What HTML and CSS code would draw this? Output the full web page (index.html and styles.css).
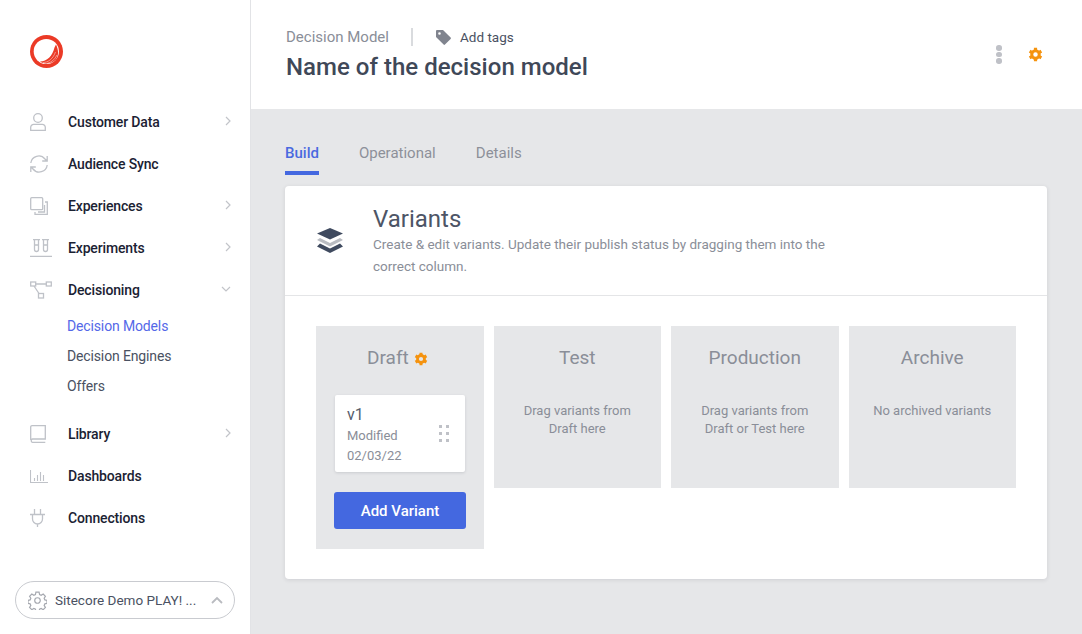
FILE: index.html
```html
<!DOCTYPE html>
<html lang="en">
<head>
<meta charset="utf-8">
<title>Decision Model</title>
<link rel="stylesheet" href="styles.css">
</head>
<body>
<svg class="defs" width="0" height="0">
  <symbol id="cog" viewBox="0 0 16 16">
    <circle cx="8" cy="8" r="4" fill="none" stroke="currentColor" stroke-width="3.200"/>
    <path d="M6.300 .8h3.400v3H6.300zM6.300 12.200h3.400v3H6.300z" fill="currentColor"/>
    <path d="M6.300 .8h3.400v3H6.300zM6.300 12.200h3.400v3H6.300z" fill="currentColor" transform="rotate(60 8 8)"/>
    <path d="M6.300 .8h3.400v3H6.300zM6.300 12.200h3.400v3H6.300z" fill="currentColor" transform="rotate(120 8 8)"/>
  </symbol>
</svg>
<div class="app">
  <aside class="sidebar">
    <div class="logo">
      <svg width="33" height="33" viewBox="0 0 33 33">
        <circle cx="16.500" cy="16.500" r="16.500" fill="#eb3a26"/>
        <circle cx="16.300" cy="16.500" r="12.600" fill="#fff"/>
        <path d="M10 26.500 C17 26.500 22.500 21 24.500 12.500 L26 9.500 C28.500 15 29 20 26 24.500 C22 29 15 30 10 26.500 Z" fill="#eb3a26"/>
        <path d="M13 27.500 C18 27.500 23 24 25.500 17 M17 28.500 C21 27.500 25 24.500 27 20" stroke="#fff" stroke-width=".45" fill="none"/>
      </svg>
    </div>
    <nav class="nav">
      <a class="nav-item">
        <svg class="nav-icon" viewBox="0 0 22 18"><circle cx="8" cy="5" r="4.300"/><path d="M.7 17.300v-3a3 3 0 0 1 3-3h8.600a3 3 0 0 1 3 3v3z"/></svg>
        <span class="nav-label">Customer Data</span>
        <svg class="chev" viewBox="0 0 8 12"><path d="M2 2l4 4-4 4"/></svg>
      </a>
      <a class="nav-item">
        <svg class="nav-icon" viewBox="0 0 22 18"><path d="M.8 8a8 8 0 0 1 14.200-4l2 2M17.200 1v5h-5M17.200 10a8 8 0 0 1-14.200 4l-2-2M.8 17v-5h5"/></svg>
        <span class="nav-label">Audience Sync</span>
      </a>
      <a class="nav-item">
        <svg class="nav-icon" viewBox="0 0 22 18"><rect x=".7" y=".7" width="12" height="12" rx="1"/><path d="M15 5h2.300v12.300H5V15M8 15h6.500V8"/></svg>
        <span class="nav-label">Experiences</span>
        <svg class="chev" viewBox="0 0 8 12"><path d="M2 2l4 4-4 4"/></svg>
      </a>
      <a class="nav-item">
        <svg class="nav-icon" viewBox="0 0 22 18"><path d="M3 .7h7M4.500 .7v9.800a2 2 0 0 0 4 0V.7M12 .7h7M13.500 .7v9.800a2 2 0 0 0 4 0V.7M4.500 6h4M13.500 6h4M0 17.300h22"/></svg>
        <span class="nav-label">Experiments</span>
        <svg class="chev" viewBox="0 0 8 12"><path d="M2 2l4 4-4 4"/></svg>
      </a>
      <a class="nav-item">
        <svg class="nav-icon" viewBox="0 0 22 18"><rect x=".7" y="1" width="5" height="4"/><rect x="16.300" y="1" width="5" height="4"/><rect x="8.500" y="12.500" width="5" height="4.500"/><path d="M5.700 3h10.600M4 5l5 7.500"/></svg>
        <span class="nav-label">Decisioning</span>
        <svg class="chev down" viewBox="0 0 12 8"><path d="M2 2l4 4 4-4"/></svg>
      </a>
      <div class="subnav">
        <a class="sub-item active">Decision Models</a>
        <a class="sub-item">Decision Engines</a>
        <a class="sub-item">Offers</a>
      </div>
      <a class="nav-item">
        <svg class="nav-icon" viewBox="0 0 22 18"><path d="M.7 15V2a1.300 1.300 0 0 1 1.300-1.300h13.300V14H2.500a1.700 1.700 0 0 0 0 3.300h12.800"/></svg>
        <span class="nav-label">Library</span>
        <svg class="chev" viewBox="0 0 8 12"><path d="M2 2l4 4-4 4"/></svg>
      </a>
      <a class="nav-item">
        <svg class="nav-icon" viewBox="0 0 22 18"><path d="M.5 3v12.500H18M4.500 11v3M7.500 8v6M10.500 5v9M13.500 8v6" stroke-width="1.100"/></svg>
        <span class="nav-label">Dashboards</span>
      </a>
      <a class="nav-item">
        <svg class="nav-icon" viewBox="0 0 22 18"><path d="M4.500 0v5M10.500 0v5M0 5.500h15M2.500 5.500V10a5 5 0 0 0 10 0V5.500M7.500 15v3"/></svg>
        <span class="nav-label">Connections</span>
      </a>
    </nav>
    <div class="org">
      <svg class="org-gear" viewBox="0 0 24 24"><path d="M12 8.500a3.500 3.500 0 1 0 0 7 3.500 3.500 0 0 0 0-7zM10 1.500h4l.6 3 2 .9 2.600-1.600 2.800 2.800-1.600 2.600.9 2 2.700.6v3.800l-2.700.6-.9 2 1.600 2.600-2.800 2.800-2.600-1.600-2 .9-.6 2.700h-4l-.6-2.700-2-.9-2.600 1.600-2.800-2.800 1.600-2.600-.9-2-2.700-.6v-3.800l2.700-.6.9-2-1.600-2.600 2.800-2.800 2.600 1.600 2-.9z"/></svg>
      <span class="org-name">Sitecore Demo PLAY! ...</span>
      <svg class="org-chev" viewBox="0 0 14 8"><path d="M2 7l5-5 5 5"/></svg>
    </div>
  </aside>

  <main class="main">
    <header class="page-header">
      <div class="head-text">
        <div class="head-meta">
          <span class="head-type">Decision Model</span>
          <span class="head-sep"></span>
          <svg class="tag-icon" viewBox="0 0 15 15"><path d="M0 1a1 1 0 0 1 1-1h6l7.600 7.600a1 1 0 0 1 0 1.400l-5.600 5.600a1 1 0 0 1-1.400 0L0 7zM3.500 2.200a1.300 1.300 0 1 0 0 2.600 1.300 1.300 0 0 0 0-2.600z" fill-rule="evenodd"/></svg>
          <span class="head-tags">Add tags</span>
        </div>
        <h1 class="head-title">Name of the decision model</h1>
      </div>
      <div class="head-actions">
        <span class="kebab"><i></i><i></i><i></i></span>
        <svg class="gear"><use href="#cog"/></svg>
      </div>
    </header>

    <section class="content">
      <div class="tabs">
        <a class="tab active">Build</a>
        <a class="tab">Operational</a>
        <a class="tab">Details</a>
      </div>
      <div class="card">
        <div class="card-head">
          <svg class="layers" viewBox="0 0 26 25">
            <path d="M3 10 0 12 13 18.500 26 12l-3-2-10 5z" fill="#b9bcc2"/>
            <path d="M13 0 26 5.500 13 11.500 0 5.500z" fill="#3f4a5f"/>
            <path d="M3 15.500 0 18.500 13 25l13-6.500-3-3-10 5z" fill="#3f4a5f"/>
          </svg>
          <div class="card-head-text">
            <h2 class="card-title">Variants</h2>
            <p class="card-desc">Create &amp; edit variants. Update their publish status by dragging them into the correct column.</p>
          </div>
        </div>
        <div class="board">
          <div class="col col-draft">
            <h3 class="col-title">Draft
              <svg class="gear small"><use href="#cog"/></svg>
            </h3>
            <div class="variant">
              <div class="variant-text">
                <div class="variant-name">v1</div>
                <div class="variant-meta">Modified</div>
                <div class="variant-meta">02/03/22</div>
              </div>
              <span class="drag"><i></i><i></i><i></i><i></i><i></i><i></i></span>
            </div>
            <button class="add-btn">Add Variant</button>
          </div>
          <div class="col">
            <h3 class="col-title">Test</h3>
            <p class="col-empty">Drag variants from<br>Draft here</p>
          </div>
          <div class="col">
            <h3 class="col-title">Production</h3>
            <p class="col-empty">Drag variants from<br>Draft or Test here</p>
          </div>
          <div class="col">
            <h3 class="col-title">Archive</h3>
            <p class="col-empty">No archived variants</p>
          </div>
        </div>
      </div>
    </section>
  </main>
</div>
</body>
</html>
```

FILE: styles.css
```css
* { box-sizing: border-box; }
html, body { margin: 0; height: 100%; }
body { font-family: Roboto, "Liberation Sans", sans-serif; background: #e6e7e9; overflow: hidden; }
.defs { display: block; height: 0; }
.app { display: flex; height: 634px; }

.sidebar { width: 251px; flex: none; background: #fff; border-right: 1px solid #e2e3e6; display: flex; flex-direction: column; padding: 35px 15px 15px; }
.logo { height: 33px; padding-left: 15px; }
.nav { margin-top: 33px; display: flex; flex-direction: column; flex: 1; }
.nav-item { height: 42px; display: flex; align-items: center; padding-left: 15px; font-size: 14px; font-weight: 500; color: #1b2233; }
.nav-icon { width: 22px; height: 18px; flex: none; fill: none; stroke: #bfc2c8; stroke-width: 1.300; }
.nav-label { margin-left: 16px; flex: 1; letter-spacing: -.15px; }
.chev { width: 8px; height: 12px; margin-right: 3px; margin-top: -3px; fill: none; stroke: #c2c4c9; stroke-width: 1.200; }
.chev.down { width: 12px; height: 8px; margin-right: 3px; }
.subnav { display: flex; flex-direction: column; margin-bottom: 12px; }
.sub-item { height: 30px; line-height: 30px; padding-left: 52px; font-size: 14px; color: #4a5162; letter-spacing: -.14px; }
.sub-item.active { color: #5468e8; }

.org { height: 38px; width: 220px; border: 1px solid #c9cbd0; border-radius: 19px; display: flex; align-items: center; padding: 0 10px 0 12px; }
.org-gear { width: 19px; height: 19px; fill: none; stroke: #a5a8af; stroke-width: 1.500; flex: none; }
.org-name { margin-left: 8px; font-size: 13.500px; color: #4a5162; flex: 1; white-space: nowrap; }
.org-chev { width: 14px; height: 8px; fill: none; stroke: #b9bbc0; stroke-width: 1.800; flex: none; }

.main { flex: 1; min-width: 0; display: flex; flex-direction: column; }
.page-header { height: 109px; background: #fff; display: flex; justify-content: space-between; padding: 27px 39px 0 35px; }
.head-meta { display: flex; align-items: center; height: 20px; }
.head-type { font-size: 15px; color: #8a8e98; width: 125px; }
.head-sep { width: 2px; height: 18px; background: #d9dbde; }
.tag-icon { width: 15px; height: 15px; margin-left: 23px; fill: #80848e; }
.head-tags { margin-left: 9px; font-size: 13.500px; color: #4a5162; }
.head-title { margin: 7px 0 0; font-size: 24px; font-weight: 500; line-height: 26px; color: #3f4858; letter-spacing: .02px; }
.head-actions { display: flex; align-items: flex-start; gap: 26px; padding-top: 18px; }
.kebab { display: flex; flex-direction: column; gap: 1px; width: 6px; }
.kebab i { width: 5.500px; height: 5.500px; border-radius: 50%; background: #bfc1c7; }
.gear { width: 15px; height: 15px; color: #f5930f; margin-top: 2px; }
.gear.small { width: 14px; height: 14px; margin: 0 4px -2px 1px; }

.content { flex: 1; padding: 0 35px 0 34px; }
.tabs { display: flex; gap: 40px; height: 66px; padding-top: 34px; }
.tab { font-size: 15px; color: #8d9099; height: 32px; line-height: 21px; }
.tab.active { color: #4a6ae0; font-weight: 500; border-bottom: 4px solid #4468e0; }

.card { margin-top: 11px; height: 393px; background: #fff; border-radius: 4px; box-shadow: 0 1px 4px rgba(40,45,60,.12); }
.card-head { height: 110px; display: flex; align-items: flex-start; border-bottom: 1px solid #e4e5e7; padding: 20px 0 0 32px; }
.layers { width: 26px; height: 25px; flex: none; margin-top: 22px; }
.card-head-text { margin-left: 30px; width: 470px; }
.card-title { margin: 0; font-size: 24px; font-weight: 400; line-height: 27px; color: #4d5566; }
.card-desc { margin: 0; font-size: 13.500px; line-height: 22px; color: #8a8e98; }

.board { display: grid; grid-template-columns: repeat(4, 1fr); align-items: start; padding: 30px 31px 0; gap: 10px; }
.col { min-width: 0; background: #e6e7e9; height: 162px; padding-top: 20px; text-align: center; }
.col-draft { height: 223px; padding-left: 18px; padding-right: 18px; }
.col-title { margin: 0; font-size: 19px; font-weight: 400; line-height: 24px; color: #8a8e98; }
.col-empty { margin: 32px 0 0; font-size: 13px; line-height: 18px; color: #8a8e98; }

.variant { margin: 25px 1px 0; height: 77px; background: #fff; border-radius: 2px; box-shadow: 0 1px 3px rgba(40,45,60,.15); display: flex; justify-content: space-between; text-align: left; padding: 9px 16px 0 12px; }
.variant-name { font-size: 16px; line-height: 22px; color: #565d6d; }
.variant-meta { font-size: 13px; line-height: 20px; color: #8a8e98; }
.drag { display: grid; grid-template-columns: 3px 3px; gap: 4px; align-content: start; margin-top: 21px; }
.drag i { width: 3px; height: 3px; background: #bfc1c7; }
.add-btn { display: block; width: 132px; height: 37px; margin: 20px 0 0; border: 0; border-radius: 3px; background: #4468e0; color: #fff; font: 500 15px Roboto, sans-serif; }
```
